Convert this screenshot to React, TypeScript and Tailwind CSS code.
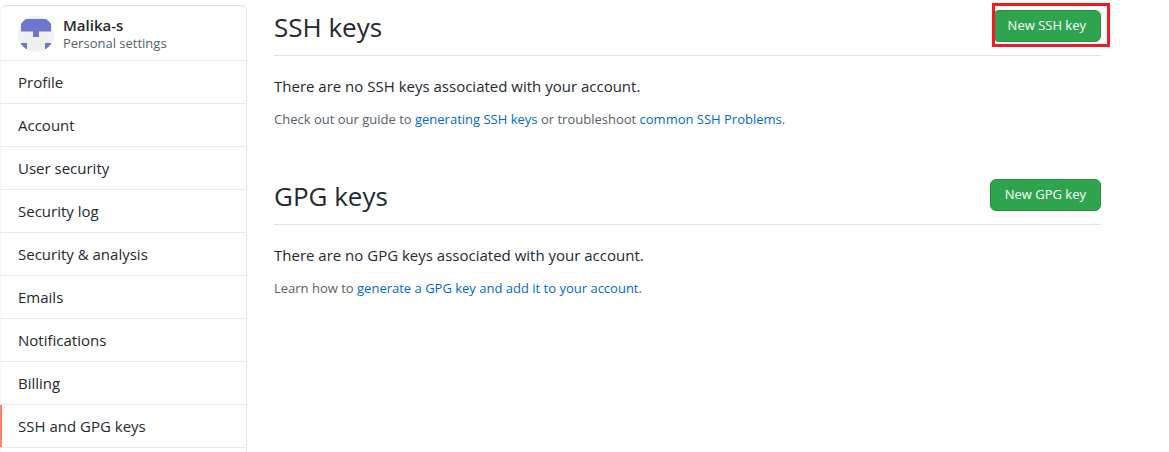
import type { ReactNode } from 'react';

const menuItems = [
  'Profile',
  'Account',
  'User security',
  'Security log',
  'Security & analysis',
  'Emails',
  'Notifications',
  'Billing',
  'SSH and GPG keys',
];

const activeItem = 'SSH and GPG keys';

function Avatar() {
  return (
    <svg className="size-9 shrink-0" viewBox="0 0 36 36" aria-hidden="true">
      <defs>
        <clipPath id="avatar-circle">
          <circle cx="18" cy="18" r="18" />
        </clipPath>
      </defs>
      <g clipPath="url(#avatar-circle)">
        <rect width="36" height="36" fill="#f0f0f0" />
        <path
          fill="#6f76cd"
          d="M3 3h30v12.5H21V21h-6v-5.500H3zM3 27h6v6H3zM27 27h6v6h-6z"
        />
      </g>
    </svg>
  );
}

function Sidebar() {
  return (
    <aside className="w-[247px] shrink-0 rounded-t-md border border-b-0 border-[#dfe4e8] border-l-[#f3f5f7]">
      <div className="flex h-[55px] items-start gap-[9px] border-b border-[#e7eaed] pt-[10px] pl-[17px]">
        <Avatar />
        <div>
          <h2 className="text-[15px] leading-[18px] font-semibold text-[#24292e]">Malika-s</h2>
          <p className="text-[13px] leading-[18px] text-[#586069]">Personal settings</p>
        </div>
      </div>
      <nav aria-label="Personal settings">
        {menuItems.map((item) => (
          <a
            key={item}
            href="#"
            aria-current={item === activeItem ? 'page' : undefined}
            className="relative flex h-[43px] items-center border-b border-[#e7eaed] pl-[17px] text-[15px] text-[#24292e]"
          >
            {item === activeItem && (
              <span className="absolute inset-y-0 -left-px w-0.5 bg-[#f9826c]" />
            )}
            {item}
          </a>
        ))}
      </nav>
    </aside>
  );
}

type KeySectionProps = {
  title: string;
  action: string;
  highlighted?: boolean;
  message: string;
  children: ReactNode;
};

function KeySection({ title, action, highlighted, message, children }: KeySectionProps) {
  return (
    <section>
      <div className="flex h-[46px] items-start justify-between border-b border-[#e1e4e8]">
        <h1 className="text-[26px] leading-[34px] text-[#24292e]">{title}</h1>
        <div className="relative">
          <button
            type="button"
            className="h-8 rounded-md border border-[#2a8f47] bg-[#2ea44f] px-[14px] text-[13px] text-white"
          >
            {action}
          </button>
          {highlighted && (
            <span className="pointer-events-none absolute -top-[7px] -right-[9px] -bottom-[5px] -left-px border-3 border-[#ed1c24]" />
          )}
        </div>
      </div>
      <p className="mt-[18px] text-[15px] leading-6 text-[#24292e]">{message}</p>
      <p className="mt-[11px] text-[13px] leading-5 text-[#586069]">{children}</p>
    </section>
  );
}

export default function App() {
  return (
    <div className="flex h-screen gap-[27px] overflow-hidden bg-white pt-[5px] font-['Open_Sans','Noto_Sans',sans-serif]">
      <Sidebar />
      <main className="flex min-w-0 flex-1 flex-col gap-[50px] pt-[5px] pr-[68px]">
        <KeySection
          title="SSH keys"
          action="New SSH key"
          highlighted
          message="There are no SSH keys associated with your account."
        >
          Check out our guide to{' '}
          <a href="#" className="text-[#0366d6]">generating SSH keys</a> or troubleshoot{' '}
          <a href="#" className="text-[#0366d6]">common SSH Problems</a>.
        </KeySection>
        <KeySection
          title="GPG keys"
          action="New GPG key"
          message="There are no GPG keys associated with your account."
        >
          Learn how to{' '}
          <a href="#" className="text-[#0366d6]">generate a GPG key and add it to your account</a>.
        </KeySection>
      </main>
    </div>
  );
}
